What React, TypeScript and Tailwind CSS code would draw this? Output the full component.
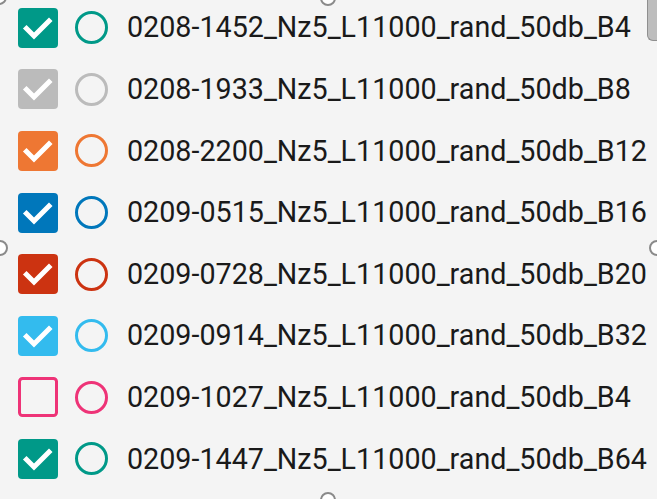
import * as React from "react";

type Item = { name: string; color: string; checked: boolean };

const items: Item[] = [
  { name: "0208-1452_Nz5_L11000_rand_50db_B4", color: "#009988", checked: true },
  { name: "0208-1933_Nz5_L11000_rand_50db_B8", color: "#BBBBBB", checked: true },
  { name: "0208-2200_Nz5_L11000_rand_50db_B12", color: "#EE7733", checked: true },
  { name: "0209-0515_Nz5_L11000_rand_50db_B16", color: "#0077BB", checked: true },
  { name: "0209-0728_Nz5_L11000_rand_50db_B20", color: "#CC3311", checked: true },
  { name: "0209-0914_Nz5_L11000_rand_50db_B32", color: "#33BBEE", checked: true },
  { name: "0209-1027_Nz5_L11000_rand_50db_B4", color: "#EE3377", checked: false },
  { name: "0209-1447_Nz5_L11000_rand_50db_B64", color: "#009988", checked: true },
];

function Check({ color, checked }: { color: string; checked: boolean }) {
  return (
    <svg width="40" height="40" viewBox="0 0 40 40" className="shrink-0">
      {checked ? (
        <>
          <rect x="0" y="0" width="40" height="40" rx="4" fill={color} />
          <path d="M8.5 20.5 L16 28 L31 13" fill="none" stroke="white" strokeWidth="5" strokeLinecap="square" />
        </>
      ) : (
        <rect x="1.5" y="1.5" width="37" height="37" rx="3" fill="none" stroke={color} strokeWidth="3" />
      )}
    </svg>
  );
}

function Handle({ className }: { className: string }) {
  return <div className={"absolute h-[16px] w-[16px] rounded-full border-2 border-[#8a8a8a] bg-white " + className} />;
}

export default function App() {
  return (
    <div className="relative h-[499px] w-[657px] overflow-hidden bg-[#f4f4f4] font-['Roboto',sans-serif]">
      <div className="-mt-[3px] flex flex-col pl-[18px]">
        {items.map((item) => (
          <div key={item.name} className="flex h-[61.6px] items-center">
            <Check color={item.color} checked={item.checked} />
            <div
              className="ml-[17px] h-[33px] w-[33px] shrink-0 rounded-full border-[3px]"
              style={{ borderColor: item.color }}
            />
            <span className="ml-[19px] whitespace-nowrap text-[28.7px] leading-none text-[#1a1a1a]">{item.name}</span>
          </div>
        ))}
      </div>

      <Handle className="-left-[9px] -top-[11px]" />
      <Handle className="left-[320px] -top-[10px]" />
      <Handle className="-left-[8px] top-[240px]" />
      <Handle className="-right-[8px] top-[240px]" />
      <Handle className="left-[320px] -bottom-[9px]" />

      <div className="absolute right-0 top-0 h-[41px] w-[10px] rounded-bl-[6px] border border-t-0 border-r-0 border-[#8f8f8f] bg-[#bdbdbd]" />
    </div>
  );
}
